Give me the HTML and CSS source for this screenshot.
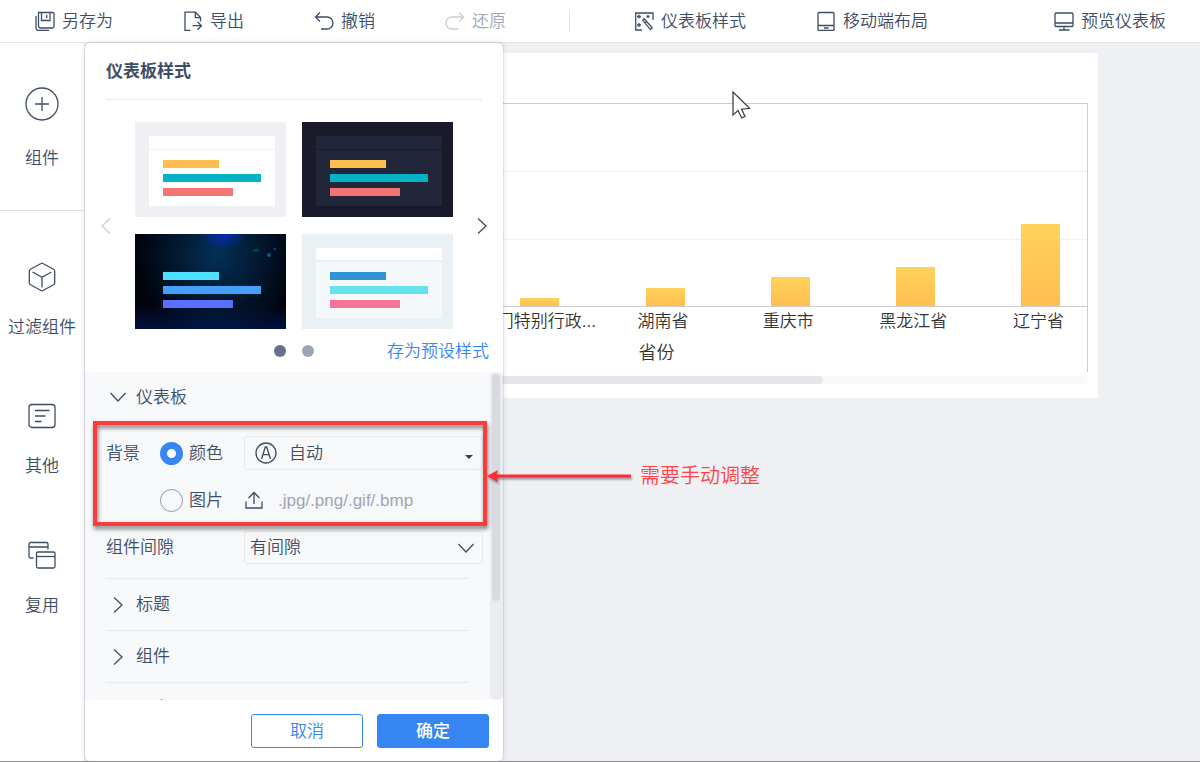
FILE: index.html
```html
<!DOCTYPE html>
<html lang="zh-CN">
<head>
<meta charset="utf-8">
<meta name="viewport" content="width=device-width, initial-scale=1">
<title>仪表板样式</title>
<link rel="stylesheet" href="styles.css">
</head>
<body>
<header class="toolbar">
  <button class="tool" type="button">
    <svg class="tool-icon" viewBox="0 0 20 20"><path d="M3.500 1.500h14a1.500 1.500 0 0 1 1.500 1.500v12.500a1.500 1.500 0 0 1-1.500 1.500h-12a2 2 0 0 1-2-2zM6.500 1.500v8h8.500v-8M11.700 4v3M1 5v12a2.500 2.500 0 0 0 2.500 2.500H14"/></svg>
    <span>另存为</span>
  </button>
  <button class="tool" type="button">
    <svg class="tool-icon" viewBox="0 0 20 20"><path d="M7.500 19.300H2V1.200h10.500L17.500 6.500v4M12.300 1.500v5.200h5M9.500 14.700h9M14.500 10.700l4 4-4 4"/></svg>
    <span>导出</span>
  </button>
  <button class="tool" type="button">
    <svg class="tool-icon" viewBox="0 0 20 20"><path d="M6 1.500L1.500 6 6 10.500M1.500 6H13a6 6 0 0 1 0 12H7"/></svg>
    <span>撤销</span>
  </button>
  <button class="tool" type="button" disabled>
    <svg class="tool-icon" viewBox="0 0 20 20"><path d="M14 1.500L18.500 6 14 10.500M18.500 6H7a6 6 0 0 0 0 12h6"/></svg>
    <span>还原</span>
  </button>
  <span class="toolbar-rule"></span>
  <button class="tool" type="button">
    <svg class="tool-icon" viewBox="0 0 20 20"><path d="M8 19H1.700V2H19v7M5 3.500v4M3 5.500h4M14 4v3M12.500 5.500h3M5 12v4M3 14h4M8.800 9.300l1.400-1.600 8 9-1.800 1.900z M11 11.800l1.600-1.600"/></svg>
    <span>仪表板样式</span>
  </button>
  <button class="tool" type="button">
    <svg class="tool-icon" viewBox="0 0 20 20"><path d="M3 1.500h14a1 1 0 0 1 1 1v16a1 1 0 0 1-1 1H3a1 1 0 0 1-1-1v-16a1 1 0 0 1 1-1zM2 14.500h16M8 17h4.500"/></svg>
    <span>移动端布局</span>
  </button>
  <button class="tool tool-preview" type="button">
    <svg class="tool-icon" viewBox="0 0 20 20"><path d="M2 2h16a1 1 0 0 1 1 1v11.500a1 1 0 0 1-1 1H2a1 1 0 0 1-1-1V3a1 1 0 0 1 1-1zM1 12h18M10 15.500V19M5 19h10.500"/></svg>
    <span>预览仪表板</span>
  </button>
</header>

<main class="workspace">
  <nav class="sidebar">
    <div class="side-top">
      <button class="side-item side-item-main" type="button">
        <svg class="side-icon" viewBox="0 0 34 34"><circle cx="17" cy="17" r="16"/><path d="M17 10v14M10 17h14"/></svg>
        <span>组件</span>
      </button>
    </div>
    <div class="side-list">
      <button class="side-item" type="button">
        <svg class="side-icon" viewBox="0 0 34 34"><path d="M16 3.500q1-.6 2 0l10.500 5.700q1.200.7 1.200 2v11.600q0 1.300-1.200 2L18 30.500q-1 .6-2 0L5.500 24.800q-1.200-.7-1.200-2V11.200q0-1.300 1.200-2zM7.500 12l9.500 5.300 9.500-5.300M17 17.300V27.500"/></svg>
        <span>过滤组件</span>
      </button>
      <button class="side-item" type="button">
        <svg class="side-icon" viewBox="0 0 34 34"><rect x="4" y="5.500" width="26" height="23" rx="3"/><path d="M10 11.500h14.500M10 17h10.500M10 22.500h6.500"/></svg>
        <span>其他</span>
      </button>
      <button class="side-item" type="button">
        <svg class="side-icon" viewBox="0 0 34 34"><path d="M8.500 20H5.500a1.500 1.500 0 0 1-1.500-1.500V6a1.500 1.500 0 0 1 1.500-1.500h16A1.500 1.500 0 0 1 23 6v5.500M4 9h19"/><rect x="11.500" y="14" width="18.500" height="16" rx="1.500"/><path d="M11.500 18.500H30"/></svg>
        <span>复用</span>
      </button>
    </div>
  </nav>

  <div class="canvas">
    <section class="card">
      <div class="plot">
        <div class="bars">
          <div class="bar bar-first" style="height:8px"></div>
          <div class="bar" style="height:18px"></div>
          <div class="bar" style="height:29px"></div>
          <div class="bar" style="height:39px"></div>
          <div class="bar" style="height:82px"></div>
        </div>
        <div class="ticks">
          <span class="tick tick-first">澳门特别行政...</span>
          <span class="tick">湖南省</span>
          <span class="tick">重庆市</span>
          <span class="tick">黑龙江省</span>
          <span class="tick">辽宁省</span>
        </div>
        <div class="axis-title">省份</div>
      </div>
      <div class="chart-scroll"><div class="chart-thumb"></div></div>
    </section>
  </div>

  <section class="panel" aria-label="仪表板样式">
    <h2 class="panel-title">仪表板样式</h2>
    <div class="gallery">
      <button class="arrow arrow-off" type="button" aria-label="上一页"><svg viewBox="0 0 12 18"><path d="M10 1.500L2 9l8 7.500"/></svg></button>
      <div class="thumbs">
        <button class="thumb thumb-light" type="button" aria-label="浅色"><span class="mini"><i></i><i></i><i></i></span></button>
        <button class="thumb thumb-dark" type="button" aria-label="深色"><span class="mini"><i></i><i></i><i></i></span></button>
        <button class="thumb thumb-space" type="button" aria-label="星空">
          <svg class="sparks" viewBox="0 0 151 95"><circle cx="134" cy="21" r="1.500"/><circle cx="140" cy="15" r=".6"/><path d="M118 17q3-2 6 0"/><circle cx="111" cy="19" r=".2"/></svg>
          <span class="mini"><i></i><i></i><i></i></span></button>
        <button class="thumb thumb-ice" type="button" aria-label="冰蓝"><span class="mini"><i></i><i></i><i></i></span></button>
      </div>
      <button class="arrow" type="button" aria-label="下一页"><svg viewBox="0 0 12 18"><path d="M2 1.500L10 9l-8 7.500"/></svg></button>
    </div>
    <div class="pager">
      <div class="dots"><span class="dot dot-on"></span><span class="dot"></span></div>
      <a class="save-link" href="#">存为预设样式</a>
    </div>

    <div class="settings">
      <div class="settings-body">
        <button class="fold" type="button"><svg class="fold-icon" viewBox="0 0 18 18"><path d="M1.500 5L9 13l7.500-8"/></svg>仪表板</button>
        <div class="fields">
          <div class="field">
            <span class="field-label">背景</span>
            <label class="choice"><input type="radio" name="background" checked>颜色</label>
            <button class="picker" type="button">
              <svg class="auto-icon" viewBox="0 0 22 22"><circle cx="11" cy="11" r="10"/><path d="M6.500 17L10.300 5h1.400l3.800 12M8 12.700h6"/></svg>
              <span>自动</span>
              <svg class="caret" viewBox="0 0 8 4"><path d="M0 0h8L4 4z"/></svg>
            </button>
          </div>
          <div class="field">
            <label class="choice choice-second"><input type="radio" name="background">图片</label>
            <button class="upload" type="button">
              <svg class="upload-icon" viewBox="0 0 20 20"><path d="M2 11.500V18h16v-6.500M10 14V2.500M4.500 8L10 2.500 15.500 8"/></svg>
              <span>.jpg/.png/.gif/.bmp</span>
            </button>
          </div>
          <div class="field">
            <label class="field-label field-label-wide" for="gap">组件间隙</label>
            <div class="select-box">
              <select id="gap" class="select"><option>有间隙</option><option>无间隙</option></select>
              <svg class="select-icon" viewBox="0 0 18 18"><path d="M1.500 5L9 13l7.500-8"/></svg>
            </div>
          </div>
        </div>
        <button class="fold fold-closed" type="button"><svg class="fold-icon" viewBox="0 0 18 18"><path d="M5 1.500L13 9l-8 7.500"/></svg>标题</button>
        <button class="fold fold-closed" type="button"><svg class="fold-icon" viewBox="0 0 18 18"><path d="M5 1.500L13 9l-8 7.500"/></svg>组件</button>
        <button class="fold fold-closed" type="button"><svg class="fold-icon" viewBox="0 0 18 18"><path d="M5 1.500L13 9l-8 7.500"/></svg>图表</button>
      </div>
      <div class="scrollbar"><div class="scroll-thumb"></div></div>
    </div>

    <div class="panel-foot">
      <button class="btn" type="button">取消</button>
      <button class="btn btn-primary" type="button">确定</button>
    </div>
  </section>

  <div class="mark-box"></div>
  <div class="mark-note">
    <svg class="mark-arrow" viewBox="0 0 146 16"><path d="M8 8h137" stroke="#ff2a32" stroke-width="3"/><path d="M1 8l11-6-2 6 2 6z" fill="#ff2a32"/></svg>
    <span>需要手动调整</span>
  </div>
  <svg class="cursor" viewBox="0 0 20 30"><path d="M1 1v23l5-4.500 3.700 7.500 3.300-1.600-3.400-7.200 7.900-.9z"/></svg>
</main>
</body>
</html>
```
FILE: styles.css
```css
* { box-sizing: border-box; }

body {
  margin: 0;
  height: 100vh;
  display: flex;
  flex-direction: column;
  border-bottom: 1px solid #8c8c8c;
  background: #eff0f4;
  color: #3d4d66;
  font-family: "Liberation Sans", "Noto Sans CJK SC", sans-serif;
  font-size: 17px;
  font-weight: 350;
  line-height: 25px;
  overflow: hidden;
}

button, select {
  margin: 0;
  padding: 0;
  border: 0;
  background: none;
  color: inherit;
  font: inherit;
}

svg { display: block; fill: none; stroke: #3d4d66; stroke-width: 1.300; flex: none; }

/* Toolbar */
.toolbar {
  flex: none;
  height: 43px;
  display: flex;
  align-items: center;
  gap: 70px;
  padding: 0 34px 0 35px;
  background: #fff;
  border-bottom: 1px solid #e4e6ea;
}
.tool { display: flex; align-items: center; gap: 7px; white-space: nowrap; }
.tool:disabled { color: #9ea6b2; }
.tool:disabled svg { stroke: #c8cdd4; }
.tool-icon { width: 20px; height: 20px; }
.tool-preview { margin-left: auto; }
.toolbar-rule { width: 1px; height: 22px; margin: 0 -6px 0 -7px; background: #e4e6ea; }

/* Workspace */
.workspace { position: relative; flex: 1; min-height: 0; display: flex; }

.sidebar { flex: none; width: 84px; background: #fff; }
.side-top { height: 168px; padding-top: 44px; border-bottom: 1px solid #dfe2e8; }
.side-list { display: flex; flex-direction: column; gap: 59px; padding-top: 49px; }
.side-item {
  width: 100%;
  display: flex;
  flex-direction: column;
  align-items: center;
  gap: 21px;
  white-space: nowrap;
}
.side-item-main { gap: 25px; }
.side-icon { width: 34px; height: 34px; }

/* Chart */
.canvas { flex: 1; min-width: 0; padding: 10px 102px 0 11px; }
.card { padding: 50px 10px 14px; background: #fff; }
.plot {
  height: 269px;
  border: 1px solid #ccc;
  border-bottom: 0;
  overflow: hidden;
}
.bars, .ticks {
  display: grid;
  grid-template-columns: repeat(8, 1fr);
  margin: 0 -16px 0 -4px;
  justify-items: center;
}
.bars {
  height: 203px;
  align-items: end;
  border-bottom: 1px solid #ccc;
  background: linear-gradient(#f2f2f2, #f2f2f2) 0 67px / 100% 1px no-repeat,
    linear-gradient(#f2f2f2, #f2f2f2) 0 135px / 100% 1px no-repeat;
}
.bar { width: 39px; background: linear-gradient(#ffd25c, #ffbe50); }
.bar-first, .tick-first { grid-column-start: 4; }
.ticks { margin: 0 -14px 0 -6px; padding-top: 2px; color: #333; }
.tick { white-space: nowrap; }
.axis-title { padding: 7px 0 0 120px; text-align: center; font-size: 18px; color: #333; }
.chart-scroll { height: 8px; margin-top: 4px; border-radius: 4px; background: #f9f9fa; }
.chart-thumb { width: 73%; height: 8px; border-radius: 4px; background: #e5e6ea; }

/* Style panel */
.panel {
  position: absolute;
  top: 0;
  bottom: 0;
  left: 85px;
  width: 418px;
  display: flex;
  flex-direction: column;
  background: #fff;
  border-radius: 5px;
  box-shadow: 0 0 0 1px rgba(60, 75, 105, .1), 0 0 6px rgba(60, 75, 105, .16);
}
.panel-title {
  margin: 0 21px;
  height: 57px;
  border-bottom: 1px solid #e6e8eb;
  font-size: 17px;
  font-weight: 700;
  line-height: 58px;
}
.gallery { display: flex; align-items: center; justify-content: space-between; padding: 22px 15px 0; }
.arrow svg { width: 12px; height: 18px; }
.arrow-off svg { stroke: #c8cdd4; }
.thumbs { display: grid; grid-template-columns: 151px 151px; gap: 17px 16px; }
.thumb { position: relative; height: 95px; padding: 14px 11px 11px 14px; }
.mini {
  position: relative;
  display: flex;
  flex-direction: column;
  gap: 6px;
  height: 70px;
  padding: 24px 14px 0;
}
.mini i { width: 56px; height: 8px; }
.mini i:nth-child(2) { width: 98px; }
.mini i:nth-child(3) { width: 70px; }
.thumb-light { background: #eff0f4; }
.thumb-light .mini { background: linear-gradient(#eff0f4, #eff0f4) 0 13px / 100% 1px no-repeat #fff; }
.thumb-dark { background: #191b2b; }
.thumb-dark .mini { background: linear-gradient(#191b2b, #191b2b) 0 13px / 100% 1px no-repeat #21263b; }
.thumb-space {
  background:
    radial-gradient(ellipse 24px 16px at 88px 0, rgba(5, 45, 210, .8), transparent),
    radial-gradient(ellipse 80px 90px at 82px 20px, #043057, transparent),
    linear-gradient(transparent 74%, #02103f),
    #01030d;
}
.thumb-ice { background: #e9f1f5; }
.thumb-ice .mini { background: linear-gradient(#fff 12px, #e9f1f5 12px, #e9f1f5 14px, #f4f8fb 14px); }
.mini i:nth-child(1) { background: #ffbe50; }
.mini i:nth-child(2) { background: #05b1c4; }
.mini i:nth-child(3) { background: #f27474; }
.thumb-space i:nth-child(1) { background: #4fe0ff; }
.thumb-space i:nth-child(2) { background: #43a0fb; }
.thumb-space i:nth-child(3) { background: #5b6eff; }
.thumb-ice i:nth-child(1) { background: #2e94d6; }
.thumb-ice i:nth-child(2) { background: #67e2ea; }
.thumb-ice i:nth-child(3) { background: #f57398; }
.sparks { position: absolute; inset: 0; fill: #0b6c9c; stroke: #0b4a70; }

.pager { display: grid; grid-template-columns: 1fr auto 1fr; align-items: center; height: 43px; padding: 1px 14px 0; }
.dots { grid-column: 2; display: flex; gap: 16px; }
.dot { width: 12px; height: 12px; border-radius: 50%; background: #9ea6b4; }
.dot-on { background: #647086; }
.save-link { justify-self: end; color: #3685f2; text-decoration: none; white-space: nowrap; }

.settings { flex: 1; min-height: 0; display: flex; background: #f7f8fa; overflow: hidden; }
.settings-body { flex: 1; padding: 0 7px 0 21px; overflow: hidden; }
.scrollbar { width: 13px; padding: 2px; border-radius: 6px; background: #ebecf0; }
.scroll-thumb { width: 8px; height: 70%; border-radius: 4px; background: #d8dadf; }

.fold { display: flex; align-items: center; gap: 9px; width: 362px; height: 50px; padding-left: 3px; }
.fold-closed { height: 52px; border-top: 1px solid #e6e8eb; }
.fold-icon { width: 18px; height: 18px; }
.fields { display: flex; flex-direction: column; gap: 13px; padding: 14px 0; }
.field { display: grid; grid-template-columns: 54px 84px 1fr; align-items: center; height: 34px; }
.field-label-wide { grid-column: span 2; }
.choice { display: flex; align-items: center; gap: 6px; }
.choice-second { grid-column: 2; }
.choice input {
  appearance: none;
  width: 23px;
  height: 23px;
  margin: 0;
  border: 1px solid #8f99a8;
  border-radius: 50%;
}
.choice input:checked { border: 7px solid #3685f2; background: #fff; }
.picker, .select-box { border: 1px solid #e6e8eb; border-radius: 3px; }
.picker { height: 34px; display: flex; align-items: center; gap: 12px; padding: 0 9px 0 10px; }
.auto-icon { width: 22px; height: 22px; }
.caret { width: 8px; height: 4px; margin: 8px 0 0 auto; fill: #2f3d57; stroke: none; }
.upload { display: flex; align-items: center; gap: 14px; color: #9ea6b2; }
.upload-icon { width: 20px; height: 20px; }
.select-box { position: relative; height: 33px; }
.select { appearance: none; width: 100%; height: 31px; padding: 0 36px 0 5px; outline: 0; }
.select-icon { position: absolute; right: 7px; top: 7px; width: 18px; height: 18px; pointer-events: none; }

.panel-foot { display: flex; justify-content: flex-end; gap: 14px; padding: 14px 14px 13px; }
.btn { width: 112px; height: 34px; border: 1px solid #3685f2; border-radius: 3px; color: #3685f2; background: #fff; }
.btn-primary { background: #3685f2; color: #fff; font-weight: 500; }

/* Callout */
.mark-box {
  position: absolute;
  top: 378px;
  left: 93px;
  width: 394px;
  height: 105px;
  border: 4px solid #fa3c3f;
  filter: drop-shadow(1px 3px 2px rgba(0, 0, 0, .5));
}
.mark-note {
  position: absolute;
  top: 420px;
  left: 486px;
  display: flex;
  align-items: center;
  gap: 8px;
  color: #ff4346;
  font-size: 20px;
  line-height: 26px;
  white-space: nowrap;
}
.mark-arrow { width: 146px; height: 16px; stroke: none; filter: drop-shadow(1px 2px 1px rgba(0, 0, 0, .4)); }
.cursor { position: absolute; top: 48px; left: 732px; width: 20px; height: 30px; fill: #fff; stroke: #444; }
```
